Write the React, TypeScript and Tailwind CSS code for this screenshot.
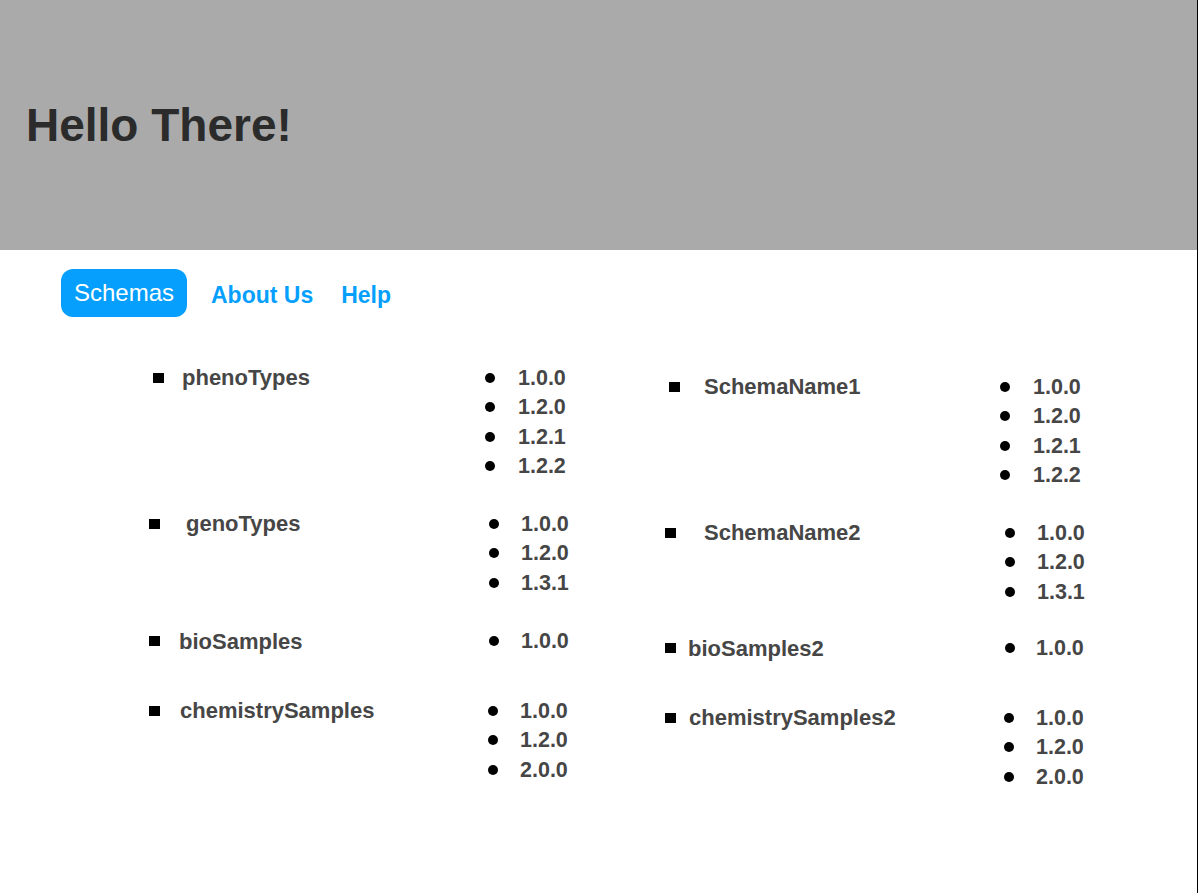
import React from 'react';

type Schema = {
  name: string;
  versions: string[];
  group: string; // top spacing of the group
  bullet: string; // bullet offset
  label: string; // label offset
  cell: string; // width of the name cell
  ver: string; // gap between dot and version text
};

const leftSchemas: Schema[] = [
  { name: 'phenoTypes', versions: ['1.0.0', '1.2.0', '1.2.1', '1.2.2'], group: 'mt-0', bullet: 'ml-[4px]', label: 'ml-[18px]', cell: 'w-[336px]', ver: 'ml-[23px]' },
  { name: 'genoTypes', versions: ['1.0.0', '1.2.0', '1.3.1'], group: 'mt-[28px]', bullet: 'ml-0', label: 'ml-[26px]', cell: 'w-[340px]', ver: 'ml-[22px]' },
  { name: 'bioSamples', versions: ['1.0.0'], group: 'mt-[29px]', bullet: 'ml-0', label: 'ml-[19px]', cell: 'w-[340px]', ver: 'ml-[22px]' },
  { name: 'chemistrySamples', versions: ['1.0.0', '1.2.0', '2.0.0'], group: 'mt-[40px]', bullet: 'ml-0', label: 'ml-[20px]', cell: 'w-[339px]', ver: 'ml-[22px]' },
];

const rightSchemas: Schema[] = [
  { name: 'SchemaName1', versions: ['1.0.0', '1.2.0', '1.2.1', '1.2.2'], group: 'mt-0', bullet: 'ml-[4px]', label: 'ml-[24px]', cell: 'w-[335px]', ver: 'ml-[23px]' },
  { name: 'SchemaName2', versions: ['1.0.0', '1.2.0', '1.3.1'], group: 'mt-[28px]', bullet: 'ml-0', label: 'ml-[28px]', cell: 'w-[340px]', ver: 'ml-[22px]' },
  { name: 'bioSamples2', versions: ['1.0.0'], group: 'mt-[27px]', bullet: 'ml-0', label: 'ml-[12px]', cell: 'w-[340px]', ver: 'ml-[21px]' },
  { name: 'chemistrySamples2', versions: ['1.0.0', '1.2.0', '2.0.0'], group: 'mt-[40px]', bullet: 'ml-0', label: 'ml-[13px]', cell: 'w-[339px]', ver: 'ml-[22px]' },
];

const SchemaGroup: React.FC<{ schema: Schema }> = ({ schema }) => (
  <div className={`flex items-start ${schema.group}`}>
    {/* Schema name with square bullet */}
    <div className={`flex h-[29.5px] shrink-0 items-center ${schema.cell}`}>
      <span className={`block h-[10px] w-[11px] shrink-0 bg-black ${schema.bullet}`} />
      <span className={`text-[22px] font-bold text-[#464646] ${schema.label}`}>{schema.name}</span>
    </div>

    {/* Versions */}
    <ul className="flex flex-col">
      {schema.versions.map((v) => (
        <li key={v} className="flex h-[29.5px] items-center">
          <span className="block h-[10px] w-[10px] shrink-0 rounded-full bg-black" />
          <span className={`text-[21.5px] font-bold text-[#464646] ${schema.ver}`}>{v}</span>
        </li>
      ))}
    </ul>
  </div>
);

export default function App() {
  return (
    <div className="h-[893px] w-[1198px] border-r border-black bg-white font-['Liberation_Sans',Arial,sans-serif]">
      {/* Banner */}
      <header className="flex h-[250px] items-center bg-[#aaaaaa] pl-[26px]">
        <h1 className="text-[46px] font-bold leading-none text-[#2b2b2b]">Hello There!</h1>
      </header>

      {/* Navigation */}
      <nav className="mt-[19px] flex items-center pl-[61px]">
        <button className="flex h-[48px] w-[126px] items-center justify-center rounded-[12px] bg-[#069ffd] text-[24px] text-white">
          Schemas
        </button>
        <a className="ml-[24px] mt-[4px] text-[23px] font-bold text-[#069ffd]">About Us</a>
        <a className="ml-[28px] mt-[4px] text-[23px] font-bold text-[#069ffd]">Help</a>
      </nav>

      {/* Schema listing */}
      <main className="mt-[46px] flex">
        <div className="w-[665px] pl-[149px]">
          {leftSchemas.map((s) => (
            <SchemaGroup key={s.name} schema={s} />
          ))}
        </div>
        <div className="mt-[9px]">
          {rightSchemas.map((s) => (
            <SchemaGroup key={s.name} schema={s} />
          ))}
        </div>
      </main>
    </div>
  );
}
